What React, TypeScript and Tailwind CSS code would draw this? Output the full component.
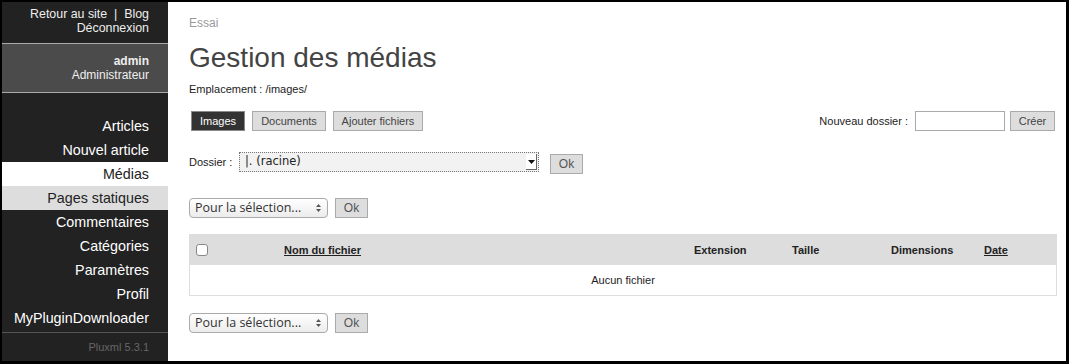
const menu = [
  'Articles',
  'Nouvel article',
  'Médias',
  'Pages statiques',
  'Commentaires',
  'Catégories',
  'Paramètres',
  'Profil',
  'MyPluginDownloader',
]

const Sidebar = () => (
  <aside className="w-[166px] shrink-0 bg-[#222] text-right text-[#eee] flex flex-col">
    <div className="pt-[5px] pb-[8px] pr-[19px] text-[12.4px] leading-[14px] border-b border-[#aaa]">
      <p>Retour au site &nbsp;|&nbsp; Blog</p>
      <p>Déconnexion</p>
    </div>
    <div className="h-[49px] bg-[#4b4b4b] pt-[10px] pr-[19px] text-[12px] leading-[14px] border-b border-[#aaa]">
      <p className="font-bold">admin</p>
      <p>Administrateur</p>
    </div>
    <ul className="mt-[21px]">
      {menu.map((item) => {
        const style =
          item === 'Médias'
            ? 'bg-white text-[#222]'
            : item === 'Pages statiques'
              ? 'bg-[#ddd] text-[#222]'
              : 'text-white'
        return (
          <li key={item} className={`h-[24px] pr-[19px] text-[14.3px] leading-[24px] ${style}`}>
            {item}
          </li>
        )
      })}
    </ul>
    <div className="mt-[2px] border-t border-[#555] pt-[7px] pr-[19px] text-[11px] leading-[14px] text-[#666]">
      Pluxml 5.3.1
    </div>
  </aside>
)

const GreyButton = ({ label, width }: { label: string; width: string }) => (
  <button className={`h-[20px] ${width} border border-[#aaa] bg-[#ddd] text-[11px] leading-[18px] text-[#444]`}>
    {label}
  </button>
)

const SelectionSelect = () => (
  <div className="flex items-start">
    <div className="flex h-[20px] w-[139px] items-center justify-between rounded-[4px] border border-[#aaa] bg-gradient-to-b from-white to-[#ececec] pl-[5px] pr-[3px] font-['Open_Sans',sans-serif] text-[12.5px] text-[#333]">
      <span>Pour la sélection...</span>
      <svg width="9" height="12" viewBox="0 0 9 12" className="mr-[1px]">
        <path d="M2 5 L4.5 2 L7 5 Z" fill="#555" />
        <path d="M2 7 L4.5 10 L7 7 Z" fill="#555" />
      </svg>
    </div>
    <button className="ml-[7px] h-[20px] w-[33px] border border-[#aaa] bg-[#ddd] text-[12px] leading-[18px] text-[#555]">
      Ok
    </button>
  </div>
)

export default function App() {
  return (
    <div className="h-[364px] w-[1069px] overflow-hidden bg-black pt-[2px] pl-[2px] pr-[3px] pb-[3px] font-['Liberation_Sans',Arial,sans-serif]">
      <div className="flex h-full">
        <Sidebar />
        <main className="flex-1 bg-white pl-[21px] pr-[9px]">
          <p className="pt-[14px] text-[12px] leading-[14px] text-[#999]">Essai</p>
          <h1 className="mt-[12px] text-[28px] leading-[32px] text-[#444]">Gestion des médias</h1>
          <p className="mt-[8px] text-[11px] leading-[14px] text-[#222]">Emplacement : /images/</p>

          <div className="mt-[15px] flex items-center justify-between">
            <div className="flex gap-[7px] pl-[2px]">
              <button className="h-[20px] w-[54px] border border-[#888] bg-[#333] text-[11px] leading-[18px] text-white">
                Images
              </button>
              <GreyButton label="Documents" width="w-[74px]" />
              <GreyButton label="Ajouter fichiers" width="w-[90px]" />
            </div>
            <div className="flex items-center pr-[2px] text-[11px] text-[#222]">
              <span>Nouveau dossier :</span>
              <input className="ml-[7px] h-[20px] w-[90px] border border-[#aaa] bg-white" />
              <GreyButton label="Créer" width="ml-[5px] w-[45px]" />
            </div>
          </div>

          <div className="mt-[21px] flex items-start">
            <span className="w-[50px] text-[11px] leading-[20px] text-[#222]">Dossier :</span>
            <div className="flex h-[20px] w-[300px] items-center justify-between border border-dotted border-[#777] bg-[#f2f2f2] pl-[5px] pr-[1px] font-['DejaVu_Sans',sans-serif] text-[11.5px] text-[#222]">
              <span>|. (racine)</span>
              <div className="flex h-[16px] w-[11px] items-center justify-center border-r border-b border-[#666] bg-white">
                <svg width="7" height="4" viewBox="0 0 7 4">
                  <path d="M0 0 L7 0 L3.5 4 Z" fill="#111" />
                </svg>
              </div>
            </div>
            <button className="ml-[11px] mt-[2px] h-[20px] w-[33px] border border-[#aaa] bg-[#ddd] text-[12px] leading-[18px] text-[#555]">
              Ok
            </button>
          </div>

          <div className="mt-[24px]">
            <SelectionSelect />
          </div>

          <div className="mt-[16px] w-[868px] border border-[#ddd] text-[11px] text-[#222]">
            <div className="grid h-[30px] grid-cols-[90px_410px_98px_100px_92px_1fr] items-center bg-[#ddd] font-bold">
              <div className="pl-[6px]">
                <div className="h-[12px] w-[12px] rounded-[3px] border border-[#888] bg-white" />
              </div>
              <div className="pl-[4px] underline">Nom du fichier</div>
              <div className="pl-[4px]">Extension</div>
              <div className="pl-[4px]">Taille</div>
              <div className="pl-[3px]">Dimensions</div>
              <div className="pl-[4px] underline">Date</div>
            </div>
            <div className="flex h-[30px] items-center justify-center">Aucun fichier</div>
          </div>

          <div className="mt-[17px]">
            <SelectionSelect />
          </div>
        </main>
      </div>
    </div>
  )
}
